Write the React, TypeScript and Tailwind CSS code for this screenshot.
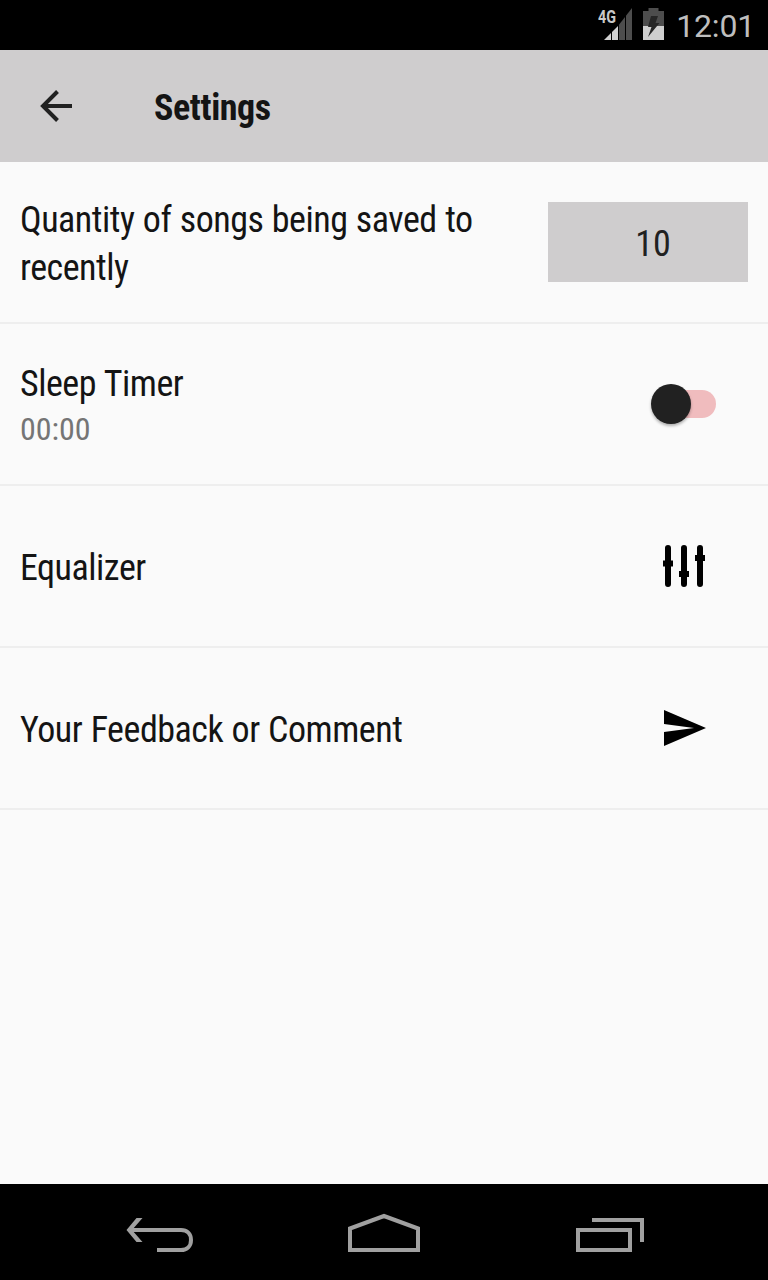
import React, { useState } from 'react';

function StatusBar() {
  return (
    <div className="flex h-[50px] shrink-0 items-center justify-end bg-black pr-[13px] text-[#bebebe]">
      <svg className="h-[50px] w-[36px]" viewBox="0 0 36 50">
        <text x="0" y="23" fontSize="17.5" fontWeight="700" fill="#c8c8c8" textLength="18" lengthAdjust="spacingAndGlyphs">
          4G
        </text>
        <path d="M6 40L20 26V40Z" fill="#d0d0d0" />
        <path d="M20 26L34 8V40H20Z" fill="#4d4d4d" />
        <path d="M13.5 24V40M20.5 22V40M27.5 14V40" stroke="#000" strokeWidth="1" />
      </svg>
      <svg className="ml-[9px] h-[50px] w-[21px]" viewBox="0 0 21 50">
        <path d="M5.500 8H15.500V11H21V26H0V11H5.500Z" fill="#4d4d4d" />
        <path d="M0 26H21V40H0Z" fill="#cfcfcf" />
        <path d="M8 16H15L12.500 23H16.500L5 37L8.500 27H5Z" fill="#262626" />
      </svg>
      <span className="ml-[12px] pt-[1px] text-[32px] leading-none tracking-[-0.2px]">12:01</span>
    </div>
  );
}

interface RowProps {
  title: string;
  subtitle?: string;
  children: React.ReactNode;
}

function SettingsRow({ title, subtitle, children }: RowProps) {
  return (
    <div className="flex h-[162px] items-center justify-between border-b-2 border-[#eeeeee] px-5">
      <div className={`w-[500px] font-stretch-condensed ${subtitle ? 'pt-[2px]' : 'pt-1'}`}>
        <p className="text-[36px] leading-[48px] tracking-[-0.48px] [word-spacing:0.6px] text-[#141414]">{title}</p>
        {subtitle && <p className="text-[32px] leading-[42px] text-[#757575]">{subtitle}</p>}
      </div>
      {children}
    </div>
  );
}

function NavigationBar() {
  return (
    <nav className="flex h-24 shrink-0 items-center justify-between bg-black px-[124px]">
      <button aria-label="Back">
        <svg className="h-24 w-[72px]" viewBox="0 0 72 96" fill="none" stroke="#a0a0a0" strokeWidth="4">
          <path d="M7 46H57C63 46 67 50 67 56S63 66 57 66H33" />
          <path d="M12.5 34H18.5L8 46L18.5 58H12.5L2.500 46Z" fill="#a0a0a0" stroke="none" />
        </svg>
      </button>
      <button aria-label="Home">
        <svg className="h-24 w-[72px]" viewBox="0 0 72 96" fill="none" stroke="#a0a0a0" strokeWidth="4">
          <path d="M2 66V44.500L36 32L70 44.500V66Z" />
        </svg>
      </button>
      <button aria-label="Recent apps">
        <svg className="h-24 w-[72px]" viewBox="0 0 72 96" fill="none" stroke="#a0a0a0" strokeWidth="4">
          <path d="M6 46H58V66H6Z" />
          <path d="M20 36H70V58" />
        </svg>
      </button>
    </nav>
  );
}

export default function App() {
  const [sleepTimer, setSleepTimer] = useState(false);

  return (
    <div className="flex h-[1280px] w-[768px] flex-col overflow-hidden bg-[#fafafa] font-['Roboto_Condensed',Roboto,sans-serif]">
      <div className="font-[Roboto,sans-serif]">
        <StatusBar />
      </div>
      <header className="flex h-28 shrink-0 items-center bg-[#cfcdce] pl-10">
        <button aria-label="Go back">
          <svg className="h-8 w-8" viewBox="0 0 32 32" fill="none" stroke="#212121" strokeWidth="4">
            <path d="M32 16H3M17.500 1.500L3 16L17.500 30.500" />
          </svg>
        </button>
        <h1 className="ml-[82px] pt-1 text-[36px] leading-[42px] font-bold font-stretch-condensed tracking-[-0.4px] text-[#141414]">
          Settings
        </h1>
      </header>

      <main className="flex-1">
        <SettingsRow title="Quantity of songs being saved to recently">
          <button className="flex h-20 w-[200px] items-center justify-center bg-[#cfcdce] pt-[3px] pl-[10px] text-[36px] font-stretch-condensed text-[#212121]">
            10
          </button>
        </SettingsRow>

        <SettingsRow title="Sleep Timer" subtitle="00:00">
          <button
            role="switch"
            aria-checked={sleepTimer}
            aria-label="Sleep Timer"
            onClick={() => setSleepTimer(!sleepTimer)}
            className="mr-8 flex h-10 w-[65px] items-center"
          >
            <span
              className={`z-10 h-10 w-10 shrink-0 rounded-full bg-[#212121] shadow-[0_2px_3px_rgba(0,0,0,0.3)] ${
                sleepTimer ? 'translate-x-[25px]' : ''
              }`}
            />
            <span className="-ml-8 h-7 w-[57px] shrink-0 rounded-full bg-[#f0bcbe]" />
          </button>
        </SettingsRow>

        <SettingsRow title="Equalizer">
          <svg className="mr-[43px] h-[42px] w-[42px]" viewBox="0 0 42 42" stroke="#000" strokeWidth="6">
            <path d="M5 3V39M21 3V39M37 3V39" strokeLinecap="round" />
            <path d="M0 18.500H10M16 29H26M32 13H42" />
          </svg>
        </SettingsRow>

        <SettingsRow title="Your Feedback or Comment">
          <svg className="mr-[42px] h-9 w-[42px]" viewBox="0 0 42 36">
            <path d="M0 0L42 18L0 36V22L30 18L0 14Z" fill="#000" />
          </svg>
        </SettingsRow>
      </main>

      <NavigationBar />
    </div>
  );
}
